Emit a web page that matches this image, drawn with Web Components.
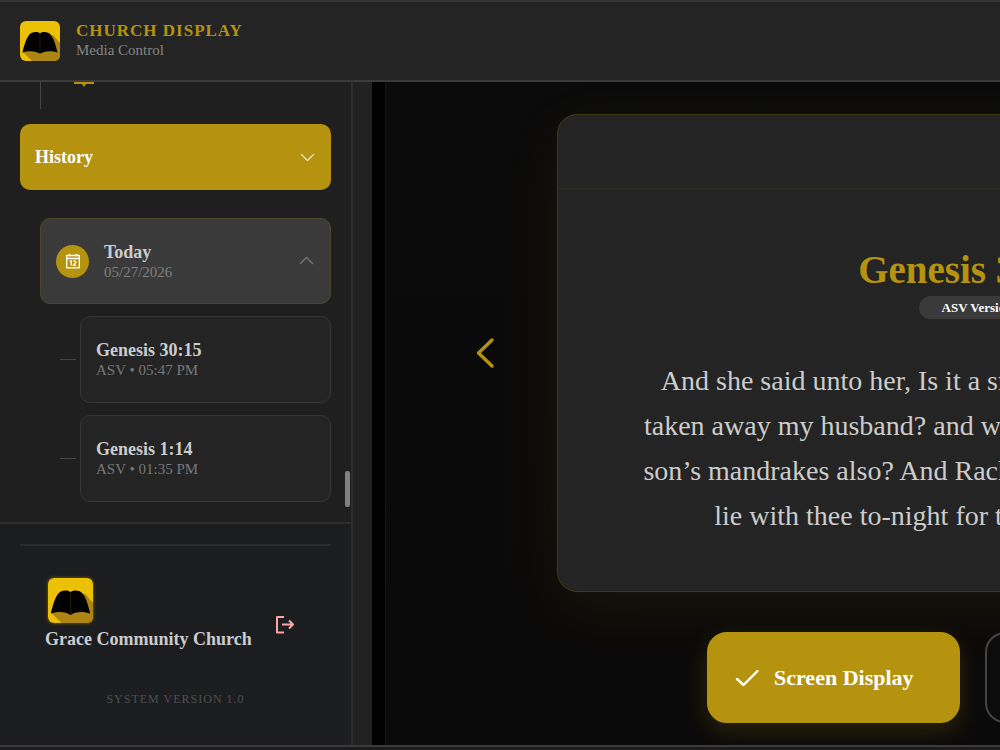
<!DOCTYPE html>
<html lang="en">
<head>
<meta charset="utf-8">
<meta name="viewport" content="width=device-width, initial-scale=1">
<title>Church Display – Media Control</title>
<style>
  :root {
    --gold: #b5930f;
    --panel: #242424;
    --side: #1f1f1f;
    --line: #363636;
    --text: #cccccc;
    --muted: #787878;
  }
  html, body { height: 100%; }
  body {
    margin: 0;
    overflow: hidden;
    background: #222;
    color: var(--text);
    font-family: "Liberation Serif", "Times New Roman", serif;
  }
</style>
</head>
<body>
<church-app></church-app>

<script>
const define = (name, html) => {
  const template = document.createElement('template');
  template.innerHTML = `<style>
    *, *::before, *::after { box-sizing: border-box; }
    button { font: inherit; color: inherit; margin: 0; cursor: pointer; }
    svg { display: block; flex: none; }
  </style>` + html;
  customElements.define(name, class extends HTMLElement {
    constructor() {
      super();
      this.attachShadow({ mode: 'open' }).append(template.content.cloneNode(true));
    }
  });
};

define('book-logo', `
  <style>
    :host { display: block; width: 40px; height: 40px; border-radius: 6px; overflow: hidden; }
    svg { width: 100%; height: 100%; }
  </style>
  <svg viewBox="0 0 40 40" aria-hidden="true">
    <rect width="40" height="40" fill="#ecc004"/>
    <path d="M3 31 12 40H40V22L33 14Z" fill="#ad8514"/>
    <path d="M2.500 31.500C4 25 6 18 9 14 11 11 17.500 10 20 12.500 22.500 10 29 11 31 14 34 18 36 25 37.500 31.500 32 29.500 24 29.500 20 32.800 16 29.500 8 29.500 2.500 31.500Z" fill="#000"/>
    <path d="M20 13V32" stroke="#3a2d08" stroke-width=".6"/>
  </svg>`);

define('app-header', `
  <style>
    :host {
      display: flex; align-items: flex-start; gap: 16px; flex: none;
      padding: 19px 20px; background: var(--panel);
      border-top: 2px solid #333338; border-bottom: 2px solid #3b3b3b;
    }
    h1 { margin: 0; font-size: 17px; line-height: 20px; letter-spacing: 1px; color: var(--gold); }
    p { margin: 0; font-size: 15px; line-height: 19px; color: #858585; }
  </style>
  <book-logo></book-logo>
  <div><h1>CHURCH DISPLAY</h1><p>Media Control</p></div>`);

define('section-toggle', `
  <style>
    :host { display: block; }
    button {
      display: flex; align-items: center; justify-content: space-between;
      width: 100%; height: 66px; padding: 0 16px 0 15px;
      border: 0; border-radius: 10px; background: var(--gold);
      color: #fff; font-size: 18px; font-weight: bold; line-height: 20px;
    }
  </style>
  <button type="button" aria-expanded="true"><slot></slot>
    <svg width="16" height="16" viewBox="0 0 16 16" fill="none" stroke="#e6dab0" stroke-width="1.600" stroke-linecap="round" stroke-linejoin="round"><path d="M2.500 5.500 8.500 11.500 14.500 5.500"/></svg>
  </button>`);

define('day-group', `
  <style>
    :host { display: block; }
    button {
      display: flex; align-items: center; gap: 15px;
      width: 100%; height: 86px; padding: 0 16px 0 15px; text-align: left;
      border: 1px solid #4b4829; border-radius: 10px; background: #3a3a3a;
    }
    .disc { display: grid; place-items: center; width: 33px; height: 33px; border-radius: 50%; background: var(--gold); }
    .label { flex: 1; display: flex; flex-direction: column; padding-top: 2px; }
    .day { font-size: 18px; line-height: 20px; font-weight: bold; }
    .date { font-size: 15px; line-height: 20px; color: #808080; }
  </style>
  <button type="button" aria-expanded="true">
    <span class="disc">
      <svg width="16" height="16" viewBox="0 0 16 16" fill="none" stroke="#fff" stroke-width="1.300" stroke-linejoin="round">
        <path d="M1.700 2.500H14.300V14.800H1.700ZM1.700 5.500H14.300M4.500 .8V3.500M11.500 .8V3.500"/>
        <path d="M4.800 8.600 6.200 7.800V12.600M8.300 8.600C8.800 7.500 11 7.600 10.800 9 10.600 10.300 8.600 11 8.300 12.400H11.200"/>
      </svg>
    </span>
    <span class="label"><span class="day"><slot></slot></span><span class="date"><slot name="date"></slot></span></span>
    <svg width="16" height="16" viewBox="0 0 16 16" fill="none" stroke="#707070" stroke-width="1.600" stroke-linecap="round" stroke-linejoin="round"><path d="M2.500 10.500 8.500 4.500 14.500 10.500"/></svg>
  </button>`);

define('history-item', `
  <style>
    :host { display: flex; align-items: center; gap: 4px; }
    .branch { flex: none; width: 16px; height: 1px; background: #444; }
    button {
      flex: 1; display: flex; flex-direction: column; justify-content: center;
      height: 87px; padding: 0 15px; text-align: left;
      border: 1px solid var(--line); border-radius: 10px; background: var(--panel);
    }
    .ref { font-size: 18px; line-height: 20px; font-weight: bold; }
    .meta { font-size: 15px; line-height: 20px; color: var(--muted); }
  </style>
  <span class="branch"></span>
  <button type="button"><span class="ref"><slot></slot></span><span class="meta"><slot name="meta"></slot></span></button>`);

define('account-panel', `
  <style>
    :host { display: block; padding: 20px 20px 39px; background: #1c1d1f; border-top: 2px solid #2d2e2e; }
    .account { display: flex; align-items: center; justify-content: space-between; border-top: 2px solid #2a2b2c; padding: 29px 36px 0 25px; }
    .who { padding-bottom: 25px; }
    book-logo { width: 45px; height: 45px; margin: 3px; box-shadow: 0 0 3px 1px #5a4a0c; }
    .name { margin: 0; padding-top: 3px; font-size: 18px; line-height: 20px; font-weight: bold; white-space: nowrap; }
    button { display: block; padding: 0; border: 0; background: none; }
    .version { margin: 18px 0 0; font-size: 12px; line-height: 14px; letter-spacing: 1px; text-align: center; color: #4e4f50; }
  </style>
  <div class="account">
    <div class="who"><book-logo></book-logo><p class="name">Grace Community Church</p></div>
    <button type="button" aria-label="Log out">
      <svg width="24" height="20" viewBox="0 0 24 20" fill="none" stroke="#fda4a4" stroke-width="2"><path d="M13 2H6V17.500H13M11 9.500H22M18 5.500 22 9.500 18 13.500" stroke-linejoin="round"/></svg>
    </button>
  </div>
  <p class="version">SYSTEM VERSION 1.0</p>`);

define('side-bar', `
  <style>
    :host { display: flex; flex-direction: column; flex: none; width: 353px; background: var(--side); border-right: 2px solid #2d2d2d; }
    .list { position: relative; flex: 1; min-height: 0; overflow: hidden; display: flex; flex-direction: column; justify-content: flex-end; padding: 0 20px 20px; }
    .list > * { flex: none; }
    .previous { height: 60px; margin: 0 0 15px 20px; border-left: 1px solid #444; padding: 11px 0 0 32px; }
    day-group { margin: 28px 0 0 20px; }
    history-item { margin: 12px 0 0 40px; }
    .thumb { position: absolute; right: 1px; bottom: 15px; width: 5px; height: 36px; border-radius: 2px; background: #808080; }
  </style>
  <nav class="list" aria-label="Library">
    <div class="previous">
      <svg width="22" height="28" viewBox="0 0 22 28" fill="none" stroke="#b5930f" stroke-width="2"><path d="M1 23H21M3 3H19V23H3Z"/><path d="M9 24H13L11 27Z" fill="#b5930f" stroke="none"/></svg>
    </div>
    <section-toggle>History</section-toggle>
    <day-group>Today<span slot="date">05/27/2026</span></day-group>
    <history-item>Genesis 30:15<span slot="meta">ASV • 05:47 PM</span></history-item>
    <history-item>Genesis 1:14<span slot="meta">ASV • 01:35 PM</span></history-item>
    <span class="thumb"></span>
  </nav>
  <account-panel></account-panel>`);

define('verse-card', `
  <style>
    :host {
      display: block; width: 832px; border: 1px solid #42391a; border-radius: 20px;
      background: var(--panel); box-shadow: 0 16px 60px rgba(181, 147, 15, .08);
    }
    .bar { height: 74px; border-bottom: 1px solid #2e2c24; }
    .body { display: flex; flex-direction: column; align-items: center; padding: 57px 81px 53px; text-align: center; }
    h2 { margin: 0; font-size: 39px; line-height: 48px; color: var(--gold); }
    .badge { margin: 2px 0 39px; padding: 0 14px 0 23px; border-radius: 12px; background: #3a3a3a; color: #fff; font-size: 13px; line-height: 23px; font-weight: bold; }
    p { margin: 0; font-size: 28px; line-height: 45px; }
  </style>
  <div class="bar"></div>
  <div class="body">
    <h2><slot name="title"></slot></h2>
    <span class="badge"><slot name="version"></slot></span>
    <p><slot></slot></p>
  </div>`);

define('step-button', `
  <style>
    :host { display: block; }
    :host([next]) { transform: rotate(180deg); }
    button { display: grid; place-items: center; width: 60px; height: 60px; padding: 0; border: 0; background: none; }
  </style>
  <button type="button" aria-label="Change verse">
    <svg width="20" height="32" viewBox="0 0 20 32" fill="none" stroke="#b5930f" stroke-width="3.400" stroke-linecap="round" stroke-linejoin="round"><path d="M16 3 2.500 16 16 29"/></svg>
  </button>`);

define('action-button', `
  <style>
    :host { display: block; }
    button {
      display: flex; align-items: center; gap: 15px;
      width: 253px; height: 91px; padding: 0 26px; border: 2px solid #444; border-radius: 20px;
      background: #0c0c0c; font-size: 22px; line-height: 26px; font-weight: bold;
    }
    :host([primary]) button { border-color: var(--gold); background: var(--gold); color: #fff; box-shadow: 0 8px 25px rgba(181, 147, 15, .2); }
  </style>
  <button type="button"><slot name="icon"></slot><slot></slot></button>`);

define('display-stage', `
  <style>
    :host { display: block; flex: 1; min-width: 0; overflow: hidden; background: #020202; padding-left: 13px; }
    .stage { min-width: 1174px; min-height: 100%; padding-top: 32px; border-left: 1px solid #161616; background: linear-gradient(#0b0b0b, #0b0a0a); }
    .viewer { display: flex; align-items: center; justify-content: center; gap: 41px; }
    .actions { display: flex; justify-content: center; gap: 25px; margin-top: 40px; }
  </style>
  <main class="stage">
    <div class="viewer">
      <step-button></step-button>
      <verse-card>
        <span slot="title">Genesis 30:15</span>
        <span slot="version">ASV Version</span>
        And she said unto her, Is it a small matter that thou hast taken away my husband? and wouldest thou take away my son’s mandrakes also? And Rachel said, Therefore he shall lie with thee to-night for thy son’s mandrakes.
      </verse-card>
      <step-button next></step-button>
    </div>
    <div class="actions">
      <action-button primary>
        <svg slot="icon" width="24" height="18" viewBox="0 0 24 18" fill="none" stroke="#fff" stroke-width="2.400" stroke-linecap="round" stroke-linejoin="round"><path d="M2 10 8.500 16 22.500 2"/></svg>
        Screen Display
      </action-button>
      <action-button>Clear</action-button>
    </div>
  </main>`);

define('church-app', `
  <style>
    :host { display: flex; flex-direction: column; height: 100vh; }
    .content { flex: 1; min-height: 0; display: flex; gap: 19px; }
    footer { flex: none; height: 5px; border-top: 2px solid #3b3b3b; background: #1d1b1c; }
  </style>
  <app-header></app-header>
  <div class="content"><side-bar></side-bar><display-stage></display-stage></div>
  <footer></footer>`);
</script>
</body>
</html>
